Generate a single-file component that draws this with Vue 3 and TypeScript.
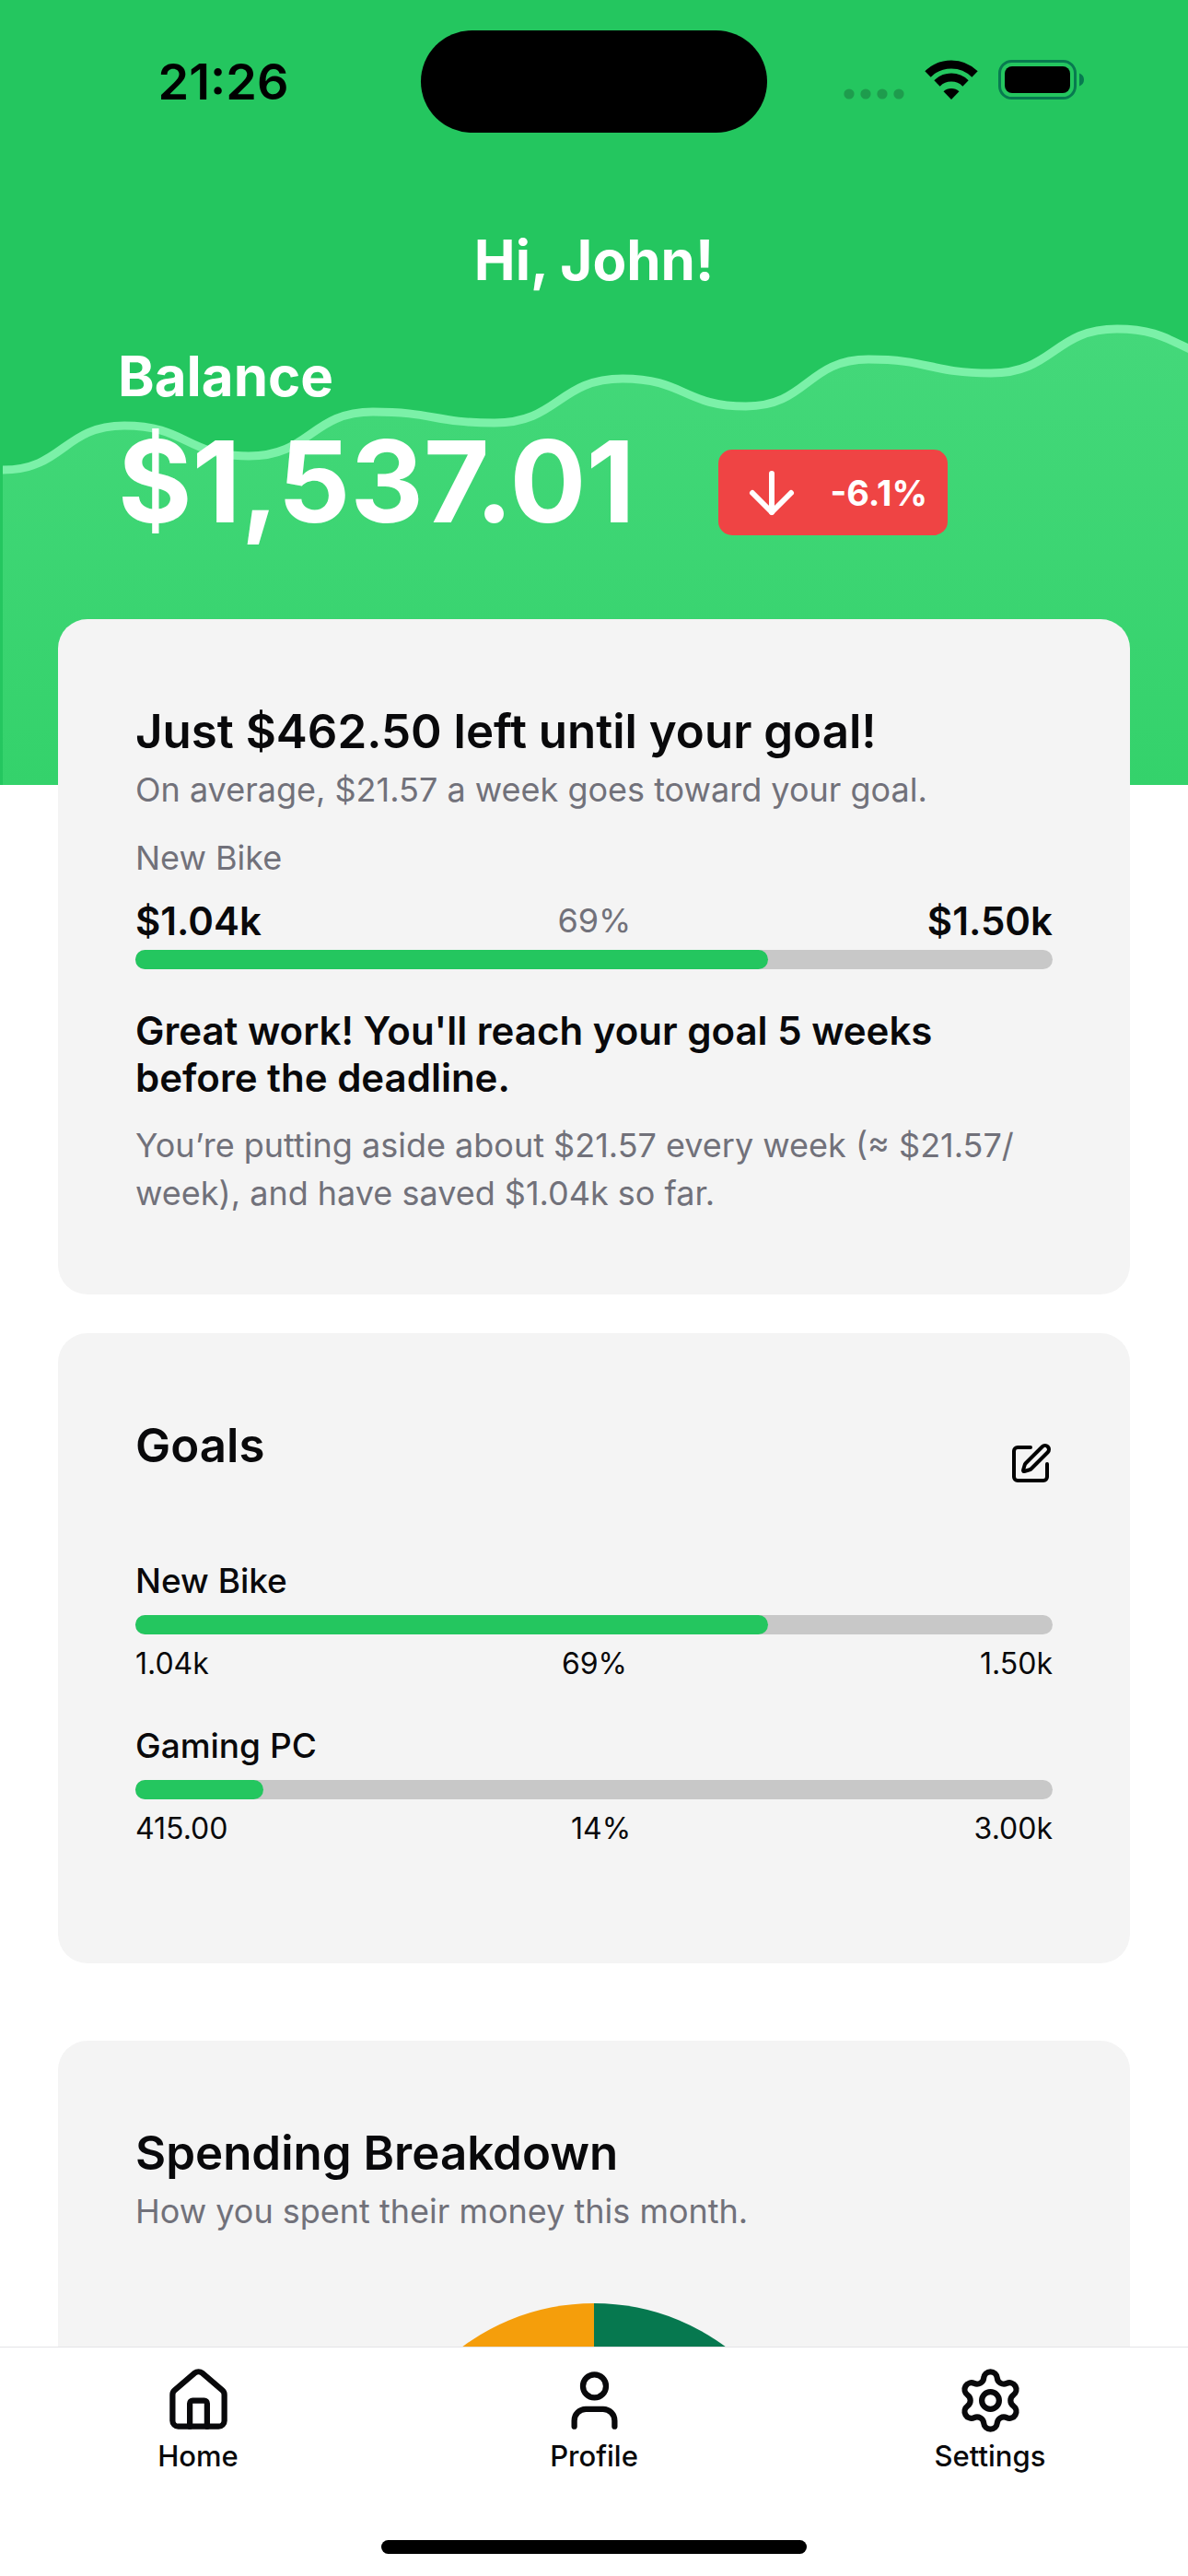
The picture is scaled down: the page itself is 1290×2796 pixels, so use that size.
<script setup lang="ts">
interface Goal {
  name: string
  saved: string
  target: string
  percent: number
}

const goals: Goal[] = [
  { name: 'New Bike', saved: '1.04k', target: '1.50k', percent: 69 },
  { name: 'Gaming PC', saved: '415.00', target: '3.00k', percent: 14 },
]

// Balance history: alternating highs and lows of the trend line.
const points: [number, number][] = [
  [3, 170], [135, 122], [270, 155], [405, 107], [537, 119], [676, 71],
  [810, 101], [943, 50], [1076, 65], [1213, 17], [1348, 50],
]

const linePath = points
  .map(([x, y], i) => {
    if (i === 0) return `M${x} ${y}`
    const [px, py] = points[i - 1]
    const mid = (px + x) / 2
    return `C${mid} ${py} ${mid} ${y} ${x} ${y}`
  })
  .join(' ')
const areaPath = `${linePath} V512 H3 Z`
</script>

<template>
  <div class="app">
    <div class="scroll">
      <header class="hero">
        <svg class="trend" viewBox="0 0 1290 512" preserveAspectRatio="none" aria-hidden="true">
          <defs>
            <linearGradient id="trend-fill" x1="0" y1="0" x2="0" y2="1">
              <stop offset="0" stop-color="#44d87a" />
              <stop offset="1" stop-color="#34d26b" />
            </linearGradient>
          </defs>
          <path :d="areaPath" fill="url(#trend-fill)" />
          <path :d="linePath" fill="none" stroke="#7bf1a8" stroke-width="9" />
        </svg>

        <div class="status">
          <span class="time">21:26</span>
          <span class="island"></span>
          <span class="indicators">
            <svg width="66" height="44" viewBox="0 0 66 44" fill="#1e9c4d" aria-hidden="true">
              <circle cx="6" cy="37" r="5.6" />
              <circle cx="24" cy="37" r="5.6" />
              <circle cx="42" cy="37" r="5.6" />
              <circle cx="60" cy="37" r="5.6" />
            </svg>
            <svg width="58" height="44" viewBox="0 0 58 44" aria-hidden="true">
              <g fill="none" stroke="#000" stroke-width="9">
                <path d="M3.500 15.500A36 36 0 0 1 54.500 15.500" />
                <path d="M13.500 25.500A22 22 0 0 1 44.500 25.500" />
              </g>
              <path d="M29 43L20.500 34.300A12.500 12.500 0 0 1 37.500 34.300Z" fill="#000" />
            </svg>
            <svg width="94" height="44" viewBox="0 0 94 44" aria-hidden="true">
              <rect x="1.500" y="1.500" width="82" height="40" rx="13" fill="none" stroke="#087a50" stroke-width="3" />
              <rect x="7" y="7" width="71" height="29" rx="8" fill="#000" />
              <path d="M88 14.500Q93 16.500 93 21.500T88 28.500Z" fill="#087a50" />
            </svg>
          </span>
        </div>

        <h1 class="greeting">Hi, John!</h1>

        <div class="balance">
          <h2 class="balance-label">Balance</h2>
          <div class="balance-row">
            <span class="amount">$1,537.01</span>
            <span class="change">
              <svg width="72" height="72" viewBox="0 0 24 24" class="icon" aria-hidden="true">
                <path d="M12 5v14" />
                <path d="m19 12-7 7-7-7" />
              </svg>
              -6.1%
            </span>
          </div>
        </div>
      </header>

      <main class="cards">
        <section class="card">
          <h2 class="title">Just $462.50 left until your goal!</h2>
          <p class="muted">On average, $21.57 a week goes toward your goal.</p>
          <p class="muted goal-label">New Bike</p>
          <div class="figures">
            <strong>$1.04k</strong>
            <span class="muted">69%</span>
            <strong>$1.50k</strong>
          </div>
          <div class="track" role="progressbar" aria-label="New Bike" aria-valuenow="69">
            <div class="fill" :style="{ width: '69%' }"></div>
          </div>
          <p class="praise">Great work! You'll reach your goal 5 weeks before the deadline.</p>
          <p class="muted detail">You’re putting aside about $21.57 every week (≈ $21.57/<wbr>week), and have saved $1.04k so far.</p>
        </section>

        <section class="card goals">
          <div class="card-head">
            <h2 class="title">Goals</h2>
            <button type="button" class="edit" aria-label="Edit goals">
              <svg width="48" height="48" viewBox="0 0 24 24" class="icon" aria-hidden="true">
                <path d="M12 3H5a2 2 0 0 0-2 2v14a2 2 0 0 0 2 2h14a2 2 0 0 0 2-2v-7" />
                <path d="M18.375 2.625a1 1 0 0 1 3 3l-9.013 9.014a2 2 0 0 1-.853.505l-2.873.84a.5.5 0 0 1-.62-.62l.84-2.873a2 2 0 0 1 .506-.852z" />
              </svg>
            </button>
          </div>
          <div v-for="goal in goals" :key="goal.name" class="goal">
            <h3 class="goal-name">{{ goal.name }}</h3>
            <div class="track" role="progressbar" :aria-label="goal.name" :aria-valuenow="goal.percent">
              <div class="fill" :style="{ width: goal.percent + '%' }"></div>
            </div>
            <div class="goal-figures">
              <span>{{ goal.saved }}</span>
              <span>{{ goal.percent }}%</span>
              <span>{{ goal.target }}</span>
            </div>
          </div>
        </section>

        <section class="card">
          <h2 class="title">Spending Breakdown</h2>
          <p class="muted">How you spent their money this month.</p>
          <svg class="pie" width="480" height="480" viewBox="-240 -240 480 480" aria-hidden="true">
            <path d="M0 0V-240A240 240 0 0 1 0 240Z" fill="#06784f" />
            <path d="M0 0V240A240 240 0 0 1 0 -240Z" fill="#f59e0b" />
          </svg>
        </section>
      </main>
    </div>

    <nav class="tabs">
      <div class="tab-row">
        <a href="#home" class="tab">
          <svg width="75" height="75" viewBox="0 0 24 24" class="icon" aria-hidden="true">
            <path d="M15 21v-8a1 1 0 0 0-1-1h-4a1 1 0 0 0-1 1v8" />
            <path d="M3 10a2 2 0 0 1 .709-1.528l7-5.999a2 2 0 0 1 2.582 0l7 5.999A2 2 0 0 1 21 10v9a2 2 0 0 1-2 2H5a2 2 0 0 1-2-2z" />
          </svg>
          Home
        </a>
        <a href="#profile" class="tab">
          <svg width="75" height="75" viewBox="0 0 24 24" class="icon" aria-hidden="true">
            <path d="M19 21v-2a4 4 0 0 0-4-4H9a4 4 0 0 0-4 4v2" />
            <circle cx="12" cy="7" r="4" />
          </svg>
          Profile
        </a>
        <a href="#settings" class="tab">
          <svg width="75" height="75" viewBox="0 0 24 24" class="icon" aria-hidden="true">
            <path d="M9.671 4.136a2.34 2.34 0 0 1 4.659 0 2.34 2.34 0 0 0 3.319 1.915 2.34 2.34 0 0 1 2.33 4.033 2.34 2.34 0 0 0 0 3.831 2.34 2.34 0 0 1-2.33 4.033 2.34 2.34 0 0 0-3.319 1.915 2.34 2.34 0 0 1-4.659 0 2.34 2.34 0 0 0-3.32-1.915 2.34 2.34 0 0 1-2.33-4.033 2.34 2.34 0 0 0 0-3.831A2.34 2.34 0 0 1 6.35 6.051a2.34 2.34 0 0 0 3.319-1.915" />
            <circle cx="12" cy="12" r="3" />
          </svg>
          Settings
        </a>
      </div>
      <div class="home-indicator"></div>
    </nav>
  </div>
</template>

<style>
body {
  margin: 0;
  background: #fff;
}
</style>

<style scoped>
.app {
  display: flex;
  flex-direction: column;
  height: 100vh;
  font-family: Inter, "Liberation Sans", sans-serif;
  color: #09090b;
}

.scroll {
  flex: 1;
  min-height: 0;
  overflow-y: auto;
  scrollbar-width: none;
}

h1,
h2,
h3,
p {
  margin: 0;
}

.icon {
  display: block;
  flex: none;
  fill: none;
  stroke: currentColor;
  stroke-width: 2;
  stroke-linecap: round;
  stroke-linejoin: round;
}

.hero {
  position: relative;
  padding-bottom: 253px;
  background: #24c65f;
  color: #fff;
}

.trend {
  position: absolute;
  bottom: 0;
  left: 0;
  width: 100%;
  height: 512px;
}

.status,
.greeting,
.balance {
  position: relative;
}

.status {
  display: grid;
  grid-template-columns: 1fr auto 1fr;
  align-items: center;
  height: 177px;
  color: #000;
}

.time {
  padding-left: 28px;
  text-align: center;
  font-size: 54px;
  font-weight: 600;
}

.island {
  width: 376px;
  height: 111px;
  border-radius: 56px;
  background: #000;
}

.indicators {
  display: flex;
  justify-content: center;
  gap: 22px;
  padding: 0 30px 4px 0;
}

.greeting {
  margin-top: 68px;
  font-size: 60px;
  font-weight: 700;
  line-height: 75px;
  text-align: center;
}

.balance {
  margin-top: 51px;
  padding: 0 128px;
}

.balance-label {
  font-size: 60px;
  font-weight: 700;
  line-height: 75px;
}

.balance-row {
  display: flex;
  align-items: flex-end;
  gap: 90px;
}

.amount {
  font-size: 123px;
  font-weight: 700;
  line-height: 153px;
}

.change {
  display: flex;
  align-items: center;
  gap: 28px;
  height: 93px;
  margin-bottom: 18px;
  padding: 0 22px;
  border-radius: 15px;
  background: #ef4444;
  font-size: 38px;
  font-weight: 700;
}

.cards {
  position: relative;
  display: flex;
  flex-direction: column;
  gap: 42px;
  margin-top: -180px;
  padding: 0 63px 84px;
}

.card {
  padding: 84px;
  border-radius: 32px;
  background: #f4f4f4;
}

.title {
  font-size: 51px;
  font-weight: 600;
  line-height: 75px;
}

.muted {
  color: #71717a;
  font-size: 36px;
  line-height: 52px;
}

.goal-label {
  margin-top: 22px;
}

.figures {
  display: flex;
  justify-content: space-between;
  align-items: center;
  height: 60px;
  margin: 12px 0 2px;
  font-size: 42px;
}

.figures strong {
  font-weight: 600;
}

.track {
  height: 21px;
  border-radius: 11px;
  background: #c8c8c8;
}

.fill {
  height: 100%;
  border-radius: 11px;
  background: #24c65f;
}

.praise {
  margin-top: 41px;
  font-size: 42px;
  font-weight: 600;
  line-height: 51px;
}

.detail {
  margin-top: 22px;
}

.goals {
  margin-bottom: 42px;
}

.card-head {
  display: flex;
  justify-content: space-between;
  align-items: flex-start;
  margin-bottom: 42px;
}

.edit {
  padding: 34px 0;
  border: 0;
  background: none;
  color: #000;
}

.goal {
  margin-bottom: 40px;
}

.goal-name {
  margin-bottom: 10px;
  font-size: 37px;
  font-weight: 500;
  line-height: 54px;
}

.goal-figures {
  display: flex;
  justify-content: space-between;
  margin-top: 10px;
  font-size: 32px;
  line-height: 44px;
}

.pie {
  display: block;
  margin: 74px auto 0;
}

.tabs {
  flex: none;
  padding-bottom: 24px;
  border-top: 1px solid #e4e4e7;
  background: #fff;
}

.tab-row {
  display: flex;
  padding-top: 20px;
}

.tab {
  display: flex;
  flex: 1;
  flex-direction: column;
  align-items: center;
  gap: 5px;
  color: #09090b;
  font-size: 31px;
  font-weight: 500;
  line-height: 36px;
  text-decoration: none;
}

.home-indicator {
  width: 462px;
  height: 15px;
  margin: 73px auto 0;
  border-radius: 8px;
  background: #000;
}
</style>
